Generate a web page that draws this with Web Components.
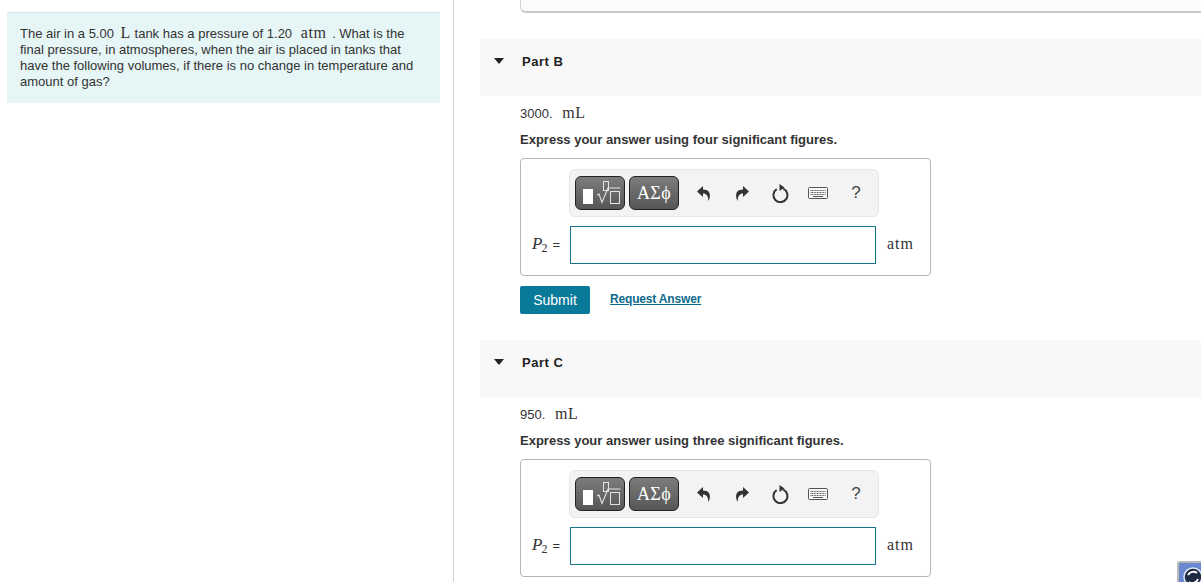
<!DOCTYPE html>
<html lang="en">
<head>
<meta charset="utf-8">
<title>Part B and Part C</title>
<style>
  html,body{margin:0;padding:0;height:582px;overflow:hidden;background:#fff}
  body{font-family:"Liberation Sans",Arial,sans-serif;font-size:13px;color:#333}
</style>
</head>
<body>
<mp-page>
  <mp-problem slot="left">
    The air in a 5.00 <mp-math class="l">L</mp-math> tank has a pressure of 1.20 <mp-math class="a">atm</mp-math> . What is the final pressure, in atmospheres, when the air is placed in tanks that have the following volumes, if there is no change in temperature and amount of gas?
  </mp-problem>
  <mp-part label="Part B" value="3000." unit="mL" figures="four" actions></mp-part>
  <mp-part label="Part C" value="950." unit="mL" figures="three"></mp-part>
</mp-page>
<mp-badge></mp-badge>

<script>
// <mp-math> - upright maths text (units)
class MpMath extends HTMLElement {
  connectedCallback() {
    this.attachShadow({ mode: "open" });
    this.shadowRoot.innerHTML = /*html*/ `
      <style>
        :host{display:inline;font-family:"Liberation Serif",serif;font-size:16px;letter-spacing:.6px;color:#333}
        :host(.l){margin:0 0 0 3px}
        :host(.a){margin:0 2px 0 5px}
      </style><slot></slot>`;
  }
}
customElements.define("mp-math", MpMath);

// <mp-page> - two columns, problem on the left and parts on the right
class MpPage extends HTMLElement {
  connectedCallback() {
    this.attachShadow({ mode: "open" });
    this.shadowRoot.innerHTML = /*html*/ `
      <style>
        :host{display:grid;grid-template-columns:454px 1fr;height:582px;overflow:hidden}
        .left{border-right:1px solid #ccd3d8;padding:12px 13px 0 7px}
        .right{padding-left:26px;min-width:0}
        .stub{box-sizing:border-box;height:13px;margin-left:40px;background:#fcfcfc;border-left:1px solid #d4d4d4;border-bottom:2px solid #c8c8c8;border-radius:0 0 0 6px}
        .parts{display:flex;flex-direction:column;gap:26px;margin-top:26px}
      </style>
      <div class="left"><slot name="left"></slot></div>
      <div class="right">
        <div class="stub"></div>
        <div class="parts"><slot></slot></div>
      </div>`;
  }
}
customElements.define("mp-page", MpPage);

// <mp-problem> - tinted statement box
class MpProblem extends HTMLElement {
  connectedCallback() {
    this.attachShadow({ mode: "open" });
    this.shadowRoot.innerHTML = /*html*/ `
      <style>
        :host{display:block;background:#e6f5f5;border-top:1px solid #d5e2e6;padding:12px 20px 13px 13px;line-height:16px;font-size:13px;color:#333;height:65px}
      </style><slot></slot>`;
  }
}
customElements.define("mp-problem", MpProblem);

// <mp-toolbar> - equation editor buttons
class MpToolbar extends HTMLElement {
  connectedCallback() {
    this.attachShadow({ mode: "open" });
    this.shadowRoot.innerHTML = /*html*/ `
      <style>
        :host{display:flex;align-items:center;box-sizing:border-box;width:310px;height:48px;padding:0 0 0 5px;background:#f3f3f3;border:1px solid #e6e6e6;border-radius:6px}
        .btn{flex:none;box-sizing:border-box;width:50px;height:34px;border:1px solid #222;border-radius:6px;background:linear-gradient(180deg,#7c7c7c,#565656);color:#fff;display:flex;align-items:center;justify-content:center;font-family:"Liberation Serif",serif;font-size:18px;letter-spacing:.4px}
        .btn + .btn{margin-left:4px}
        .tools{flex:none;display:flex;align-items:center;margin-left:6px}
        .tool{width:38px;display:flex;justify-content:center;color:#333}
        svg{display:block}
        .q{font-family:"Liberation Sans",sans-serif;font-size:17px;color:#444}
      </style>
      <div class="btn">
        <svg width="48" height="32" viewBox="0 0 48 32" fill="none">
          <rect x="7" y="12" width="10" height="15" fill="#fff"/>
          <rect x="27.500" y="4.500" width="5" height="9" stroke="#e4e4e4"/>
          <path d="M21 18l2-1 3 8.500 6-14.500h12.500" stroke="#e4e4e4" stroke-width="1.100"/>
          <rect x="34.500" y="14.500" width="9" height="12" stroke="#e4e4e4"/>
        </svg>
      </div>
      <div class="btn">&#913;&#931;&#981;</div>
      <div class="tools">
        <div class="tool"><svg width="14" height="15" viewBox="0 0 14 15"><path d="M6 0L0 5.500 6 11V7.500c3.500 0 5 2 5.500 7.500C13.500 11 14.500 3.500 6 3.500z" fill="#333"/></svg></div>
        <div class="tool"><svg width="14" height="15" viewBox="0 0 14 15"><path d="M8 0l6 5.500L8 11V7.500c-3.500 0-5 2-5.500 7.500C.5 11-.5 3.500 8 3.500z" fill="#333"/></svg></div>
        <div class="tool"><svg width="17" height="19" viewBox="0 0 17 19" fill="none"><path d="M4.700 5.200a7 7 0 1 0 6.500-.5" stroke="#333" stroke-width="2"/><path d="M7.500 0l5 3.500-5 3.500z" fill="#333"/></svg></div>
        <div class="tool"><svg width="20" height="12" viewBox="0 0 20 12" fill="none"><rect x=".5" y=".5" width="19" height="11" rx="1" stroke="#555" fill="#f8f8f8"/><path d="M2.500 3.500h15M2.500 5.500h15M2.500 7.500h15" stroke="#555" stroke-dasharray="1 .6"/><path d="M5 9.500h10" stroke="#555"/></svg></div>
        <div class="tool q">?</div>
      </div>`;
  }
}
customElements.define("mp-toolbar", MpToolbar);

// <mp-answer> - bordered answer box with P2 = input and unit
class MpAnswer extends HTMLElement {
  connectedCallback() {
    this.attachShadow({ mode: "open" });
    this.shadowRoot.innerHTML = /*html*/ `
      <style>
        :host{display:block;box-sizing:border-box;width:411px;height:118px;border:1px solid #b5b5b5;border-radius:4px;padding:10px 0 0 48px}
        .row{display:flex;align-items:center;height:38px;margin:9px 0 0 -37px}
        .lab{width:38px;margin-bottom:2px;font-family:"Liberation Serif",serif;white-space:nowrap;color:#333}
        .lab i{font-size:17px}
        .lab sub{font-size:12px;line-height:0;vertical-align:-3px;margin-left:-1px}
        .lab span{font-family:"Liberation Sans",sans-serif;font-size:13px;margin-left:5px}
        .box{box-sizing:border-box;width:306px;height:38px;border:1px solid #1b7489;background:#fff}
        .unit{margin:0 0 2px 11px;letter-spacing:1px}
      </style>
      <mp-toolbar></mp-toolbar>
      <div class="row">
        <div class="lab"><i>P</i><sub>2</sub><span>=</span></div>
        <div class="box"></div>
        <mp-math class="unit">atm</mp-math>
      </div>`;
  }
}
customElements.define("mp-answer", MpAnswer);

// <mp-part> - collapsible part header, prompt, answer box and actions
class MpPart extends HTMLElement {
  connectedCallback() {
    this.attachShadow({ mode: "open" });
    const label = this.getAttribute("label");
    const value = this.getAttribute("value");
    const unit = this.getAttribute("unit");
    const figures = this.getAttribute("figures");
    const actions = this.hasAttribute("actions")
      ? `<div class="acts"><div class="submit">Submit</div><a class="req">Request Answer</a></div>`
      : "";
    this.shadowRoot.innerHTML = /*html*/ `
      <style>
        :host{display:block}
        .head{display:flex;align-items:center;height:57px;background:#f8f8f8;font-weight:700;font-size:13px;letter-spacing:.5px;color:#222;box-sizing:border-box;padding:0 0 13px 14px}
        .tri{width:0;height:0;border:5.500px solid transparent;border-top:6px solid #222;border-bottom:0;margin-right:18px}
        .body{padding-left:40px}
        .val{height:16px;line-height:16px;margin-top:9px;font-size:13px}
        .val mp-math{margin-left:6px}
        .hint{margin-top:11px;height:16px;line-height:16px;font-weight:700;font-size:13px;color:#333}
        mp-answer{margin-top:10px}
        .acts{display:flex;align-items:center;margin-top:10px;height:28px}
        .submit{box-sizing:border-box;width:70px;height:28px;line-height:28px;text-align:center;background:#0a7a9b;color:#fff;border-radius:2px;font-size:14px}
        .req{margin:0 0 2px 20px;color:#0c6b8c;font-size:12px;font-weight:700;letter-spacing:-.17px;text-decoration:underline}
      </style>
      <div class="head"><span class="tri"></span>${label}</div>
      <div class="body">
        <div class="val">${value} <mp-math>${unit}</mp-math></div>
        <div class="hint">Express your answer using ${figures} significant figures.</div>
        <mp-answer></mp-answer>
        ${actions}
      </div>`;
  }
}
customElements.define("mp-part", MpPart);

// <mp-badge> - the corner widget floating over the page
class MpBadge extends HTMLElement {
  connectedCallback() {
    this.attachShadow({ mode: "open" });
    this.shadowRoot.innerHTML = /*html*/ `
      <style>
        :host{position:fixed;left:1177px;top:561px;width:40px;height:40px;box-sizing:border-box;border:2px solid #b8b8b8;border-radius:3px 0 0 0;background:#6a88cf;display:block;overflow:hidden}
        svg{display:block}
      </style>
      <svg width="36" height="36" viewBox="0 0 36 36" fill="none"><circle cx="14" cy="14" r="9" fill="#1f2a44" stroke="#dfe6f5" stroke-width="1.500"/><path d="M9 12a6 6 0 0 1 9-2M19 16a6 6 0 0 1-9 3" stroke="#fff" stroke-width="2"/></svg>`;
  }
}
customElements.define("mp-badge", MpBadge);
</script>
</body>
</html>
